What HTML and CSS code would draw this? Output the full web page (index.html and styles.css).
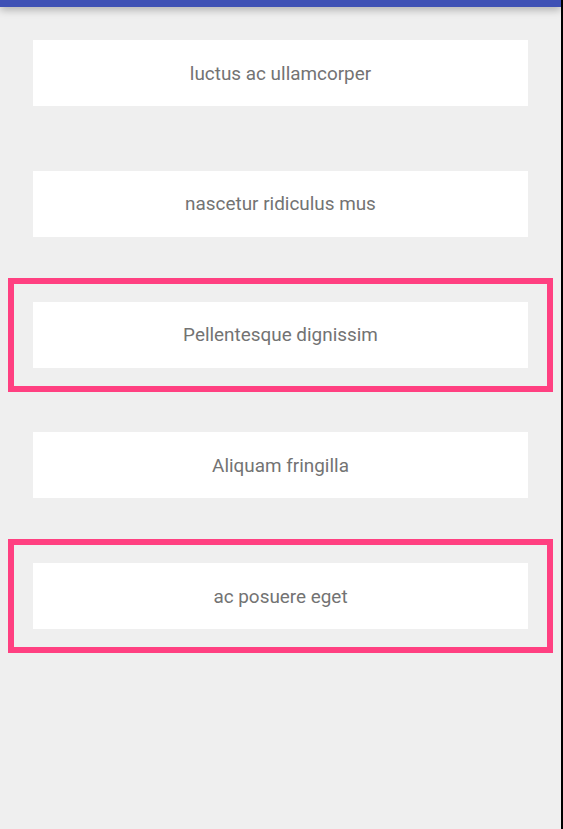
FILE: index.html
```html
<!DOCTYPE html>
<html>
<head>
<meta charset="utf-8">
<link rel="stylesheet" href="styles.css">
</head>
<body>
<div class="screen">
  <div class="main">
    <div class="appbar"></div>
    <div class="list">
      <div class="item"><div class="card">luctus ac ullamcorper</div></div>
      <div class="item"><div class="card">nascetur ridiculus mus</div></div>
      <div class="item selected"><div class="card">Pellentesque dignissim</div></div>
      <div class="item"><div class="card">Aliquam fringilla</div></div>
      <div class="item selected"><div class="card">ac posuere eget</div></div>
    </div>
  </div>
  <div class="edge"></div>
</div>
</body>
</html>
```
FILE: styles.css
```css
html, body {
  margin: 0;
  padding: 0;
  height: 100%;
}
body {
  background: #efefef;
  font-family: Roboto, "Liberation Sans", sans-serif;
}
.screen {
  display: flex;
  height: 100%;
}
.main {
  flex: 1;
  position: relative;
}
.edge {
  width: 2px;
  background: #000;
}
.appbar {
  height: 7px;
  background: #3f51b5;
  box-shadow: 0 2px 8px rgba(0, 0, 0, 0.35);
  position: relative;
  z-index: 1;
}
.list {
  display: flex;
  flex-direction: column;
  gap: 16.75px;
  padding-top: 9px;
}
.item {
  margin: 0 8px;
  padding: 18px 19px;
  border: 6px solid transparent;
}
.item.selected {
  border-color: #ff4081;
}
.card {
  height: 66px;
  background: #fff;
  display: flex;
  align-items: center;
  justify-content: center;
  font-size: 18.9px;
  color: #737373;
}
```
